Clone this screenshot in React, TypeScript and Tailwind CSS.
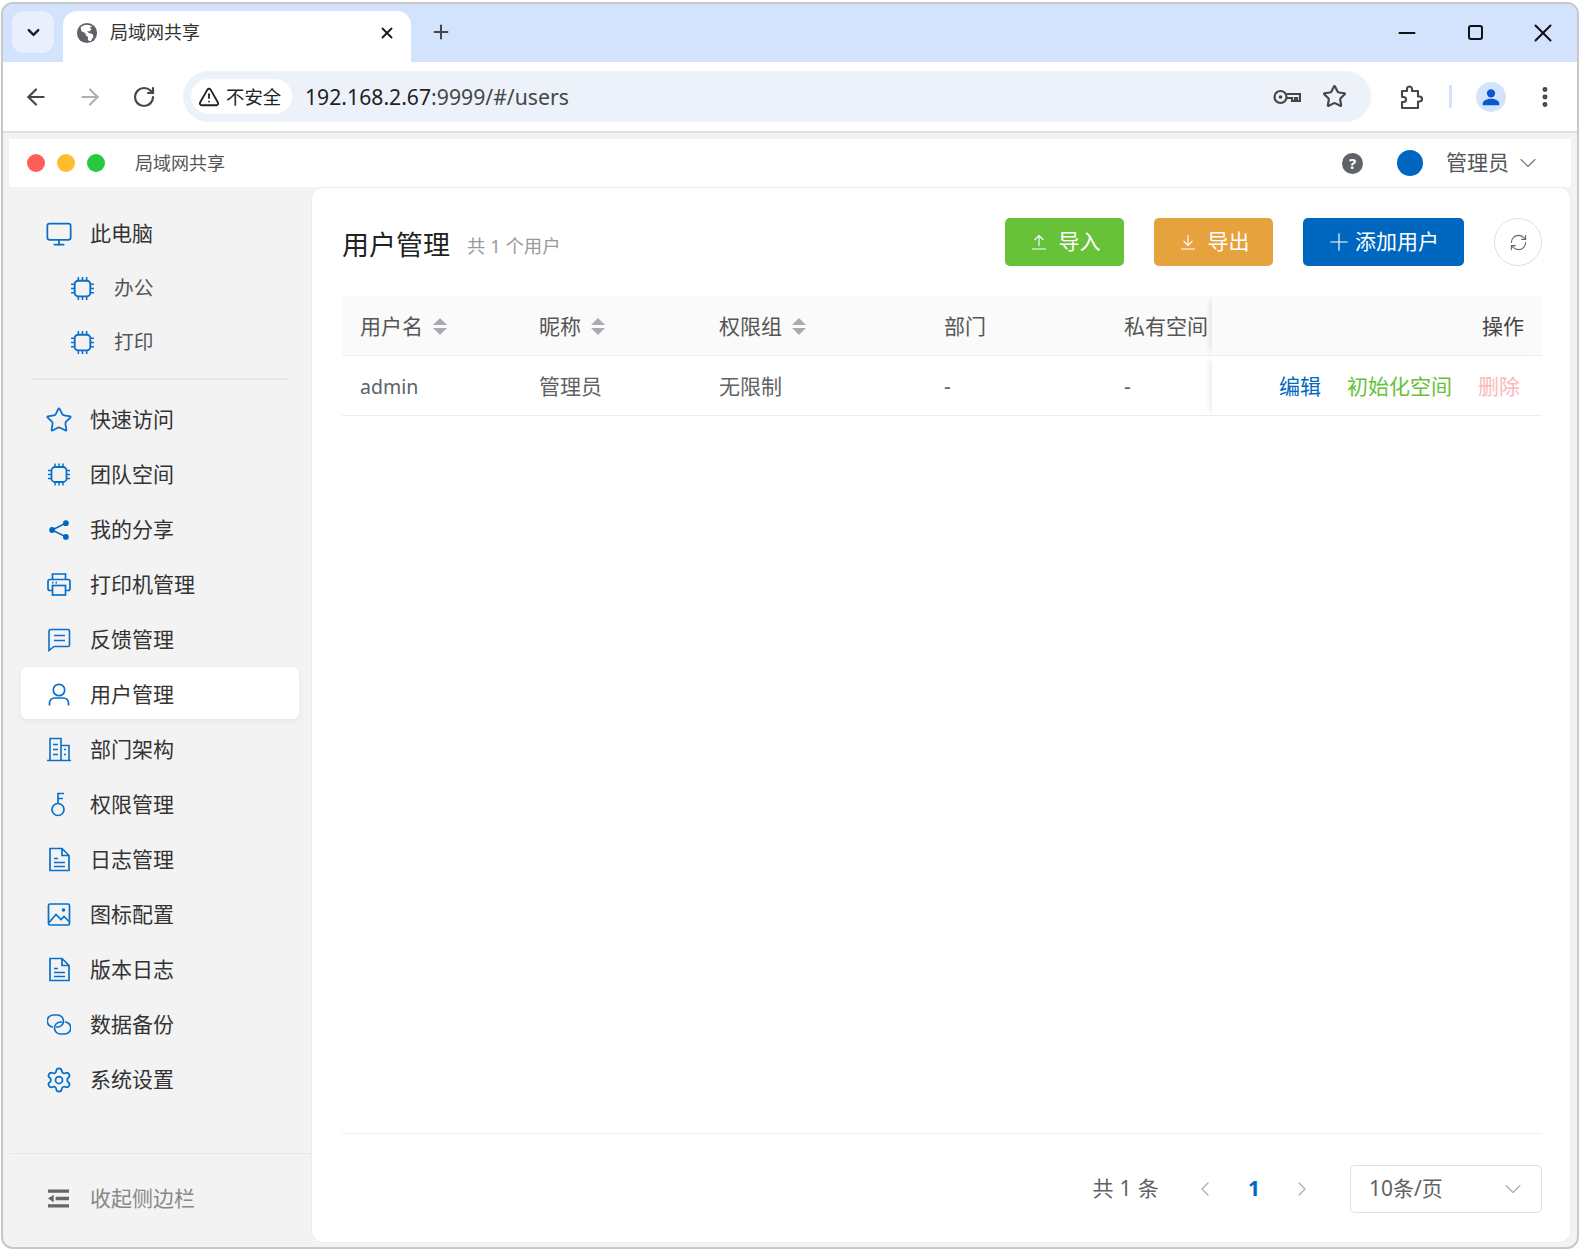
import React from 'react';
import { ArrowLeft, ArrowRight, ChevronDown, ChevronLeft, ChevronRight, EllipsisVertical, Minus, Monitor, Plus, RefreshCw, RotateCw, Settings, Star, TriangleAlert, X } from 'lucide-react';

const font = 'font-["Noto_Sans","Noto_Sans_CJK_SC",sans-serif]';

// icons the packages don't have in this shape
const Chip = ({ className = 'w-6 h-6' }: { className?: string }) => (
  <svg viewBox="0 0 24 24" fill="none" stroke="currentColor" strokeWidth="1.5" className={className}>
    <rect x="4.5" y="4.5" width="15" height="15" rx="3.5" strokeWidth="1.8" />
    <path d="M8 1v3M12 1v3M16 1v3M8 20v3M12 20v3M16 20v3M1 8h3M1 12h3M1 16h3M20 8h3M20 12h3M20 16h3" />
  </svg>
);
const Share = ({ className = 'w-6 h-6' }: { className?: string }) => (
  <svg viewBox="0 0 24 24" fill="currentColor" className={className}>
    <circle cx="19.5" cy="4.5" r="3.2" />
    <circle cx="4.5" cy="12" r="3.2" />
    <circle cx="19.5" cy="19.5" r="3.2" />
    <path d="M4.5 12 19.5 4.5M4.5 12l15 7.5" stroke="currentColor" strokeWidth="1.8" />
  </svg>
);
const PrinterIcon = ({ className = 'w-6 h-6' }: { className?: string }) => (
  <svg viewBox="0 0 24 24" fill="none" stroke="currentColor" strokeWidth="1.7" className={className}>
    <path d="M5.5 7V1.5h13V7" />
    <path d="M5.5 18H3a2 2 0 0 1-2-2V9a2 2 0 0 1 2-2h18a2 2 0 0 1 2 2v7a2 2 0 0 1-2 2h-2.5" />
    <rect x="5.5" y="13" width="13" height="9.500" />
    <path d="M5 10.200h1.500M8.500 10.200h1.500" />
  </svg>
);
const Chat = ({ className = 'w-6 h-6' }: { className?: string }) => (
  <svg viewBox="0 0 24 24" fill="none" stroke="currentColor" strokeWidth="1.6" className={className}>
    <path d="M4 2h17a1.5 1.5 0 0 1 1.5 1.5v14a1.5 1.5 0 0 1-1.5 1.5H7l-5 4V4a2 2 0 0 1 2-2Z" />
    <path d="M7 8h11M7 13h11" />
  </svg>
);
const Person = ({ className = 'w-6 h-6' }: { className?: string }) => (
  <svg viewBox="0 0 24 24" fill="none" stroke="currentColor" strokeWidth="1.7" className={className}>
    <circle cx="12" cy="7.5" r="5.7" />
    <path d="M2.5 23v-2.5a5 5 0 0 1 5-5h9a5 5 0 0 1 5 5V23" />
  </svg>
);
const Building = ({ className = 'w-6 h-6' }: { className?: string }) => (
  <svg viewBox="0 0 24 24" fill="none" stroke="currentColor" strokeWidth="1.6" className={className}>
    <path d="M3 23V1h11v22M14 8h8v15M0 23h24" />
    <path d="M6 7h5M6 12h5M6 17h5M17 12h2M17 17h2" />
  </svg>
);
const KeyIcon = ({ className = 'w-6 h-6' }: { className?: string }) => (
  <svg viewBox="0 0 24 24" fill="none" stroke="currentColor" strokeWidth="1.7" className={className}>
    <circle cx="11" cy="17" r="6" />
    <path d="M11 11V1h6M11 6h5" />
  </svg>
);
const Doc = ({ className = 'w-6 h-6' }: { className?: string }) => (
  <svg viewBox="0 0 24 24" fill="none" stroke="currentColor" strokeWidth="1.7" className={className}>
    <path d="M3 1h12l7 7v15H3Z" />
    <path d="M15 1v7h7M7 11h4M7 15h11M7 19h11" />
  </svg>
);
const Picture = ({ className = 'w-6 h-6' }: { className?: string }) => (
  <svg viewBox="0 0 24 24" fill="none" stroke="currentColor" strokeWidth="1.7" className={className}>
    <rect x="1.5" y="1.5" width="21" height="21" rx="1.5" />
    <path d="m2 20 7-8 5 5 3-3 5 5" />
    <circle cx="16.5" cy="7.5" r="1.8" fill="currentColor" stroke="none" />
  </svg>
);
const Links = ({ className = 'w-6 h-6' }: { className?: string }) => (
  <svg viewBox="0 0 24 24" fill="none" stroke="currentColor" strokeWidth="1.7" className={className}>
    <path d="M6 14.5A6 6 0 0 1 6.5 2.5h4a6 6 0 0 1 0 12H9" />
    <path d="M18 9.5a6 6 0 0 1-.5 12h-4a6 6 0 0 1 0-12H15" />
  </svg>
);
const Collapse = ({ className = 'w-6 h-6' }: { className?: string }) => (
  <svg viewBox="0 0 24 24" fill="currentColor" className={className}>
    <path d="M1 2.5h22V6H1zM9 10.2h14v3.5H9zM1 18h22v3.5H1zM7 8v8L1 12z" />
  </svg>
);
const Globe = () => (
  <svg viewBox="0 0 24 24" className="w-[22px] h-[22px]">
    <circle cx="12" cy="12" r="11" fill="#5f6368" />
    <path d="M12 3c-3 0-5 1-7 3l1 4 4 2 1 3 2 1v4l3 1 3-5-1-3-4-1-2-2h3l2-2-2-2 3-1c-2-1-4-2-6-2Z" fill="#fff" />
  </svg>
);
const KeyChrome = () => (
  <svg viewBox="0 0 28 16" fill="none" stroke="#444746" strokeWidth="2.2" className="w-[28px] h-[16px]">
    <circle cx="7.5" cy="8" r="6" />
    <circle cx="7.5" cy="8" r="1.8" fill="#444746" stroke="none" />
    <path d="M13.5 5H27v7h-3V9h-2v3h-3V9h-5.5" />
  </svg>
);
const Puzzle = () => (
  <svg viewBox="0 0 24 24" fill="none" stroke="#444746" strokeWidth="2.1" className="w-[24px] h-[26px]">
    <path d="M3 6h5V4a2.5 2.5 0 0 1 5 0v2h6v5.5h1.5a2.5 2.5 0 0 1 0 5H19V23H3v-6h1.5a2.5 2.5 0 0 0 0-5H3Z" strokeLinejoin="round" />
  </svg>
);
const ArrowUpBar = () => (
  <svg viewBox="0 0 16 16" fill="none" stroke="currentColor" strokeWidth="1.1" className="w-[16px] h-[16px]">
    <path d="M8 12V1.5M3.5 6 8 1.5 12.5 6M1 15h14" />
  </svg>
);
const ArrowDownBar = () => (
  <svg viewBox="0 0 16 16" fill="none" stroke="currentColor" strokeWidth="1.1" className="w-[16px] h-[16px]">
    <path d="M8 1v10.5M3.5 7 8 11.5 12.5 7M1 15h14" />
  </svg>
);
const Sorter = () => (
  <span className="ml-[10px] flex flex-col gap-[3px]">
    <span className="w-0 h-0 border-x-[7px] border-x-transparent border-b-[7px] border-b-[#a8abb2]" />
    <span className="w-0 h-0 border-x-[7px] border-x-transparent border-t-[7px] border-t-[#a8abb2]" />
  </span>
);

const iconCls = 'w-[25px] h-[25px] text-[#0a6fc9]';
const lucideCls = 'w-[28px] h-[28px] shrink-0 text-[#0a6fc9]';

const navTop = [
  { label: '快速访问', icon: <Star className={lucideCls} strokeWidth={1.5} /> },
  { label: '团队空间', icon: <Chip className={iconCls} /> },
  { label: '我的分享', icon: <Share className="w-[22px] h-[22px] text-[#0067c0]" /> },
  { label: '打印机管理', icon: <PrinterIcon className={iconCls} /> },
  { label: '反馈管理', icon: <Chat className={iconCls} /> },
  { label: '用户管理', icon: <Person className={iconCls} />, active: true },
  { label: '部门架构', icon: <Building className={iconCls} /> },
  { label: '权限管理', icon: <KeyIcon className={iconCls} /> },
  { label: '日志管理', icon: <Doc className={iconCls} /> },
  { label: '图标配置', icon: <Picture className={iconCls} /> },
  { label: '版本日志', icon: <Doc className={iconCls} /> },
  { label: '数据备份', icon: <Links className={iconCls} /> },
  { label: '系统设置', icon: <Settings className={lucideCls} strokeWidth={1.5} /> },
];

const NavRow = ({ label, icon, active }: { label: string; icon: React.ReactNode; active?: boolean }) => (
  <div className="h-[55px] flex items-center">
    <div className={`ml-[12px] w-[278px] h-[52px] pl-[26px] flex items-center gap-[19px] rounded-[6px] ${active ? 'mb-[4px] pt-[4px] bg-white shadow-[0_2px_6px_rgba(0,0,0,0.06)]' : ''}`}>
      <span className="w-[24px] flex justify-center">{icon}</span>
      <span className="text-[21px] text-[#333]">{label}</span>
    </div>
  </div>
);

const SubRow = ({ label }: { label: string }) => (
  <div className="h-[54px] flex items-center pl-[61px] gap-[19px]">
    <Chip className={iconCls} />
    <span className="text-[19.7px] text-[#555]">{label}</span>
  </div>
);

export default function App() {
  return (
    <div className={`w-[1581px] h-[1249px] bg-white pl-px pt-[2px] ${font}`}>
      <div className="w-[1578px] h-[1247px] flex flex-col border-2 border-[#c8c8c8] rounded-[12px] overflow-hidden bg-[#f3f3f3]">
        {/* tab strip */}
        <div className="h-[58px] shrink-0 bg-[#d3e3fd] flex items-end pl-[9px]">
          <div className="w-[42px] h-[42px] mb-[9px] rounded-[12px] bg-[#e9f0fd] flex items-center justify-center">
            <ChevronDown className="w-[19px] h-[19px] text-[#1f1f1f]" strokeWidth={3} />
          </div>
          <div className="ml-[9px] w-[348px] h-[51px] bg-white rounded-t-[14px] flex items-center pl-[13px] pr-[15px] pb-[8px]">
            <Globe />
            <span className="ml-[12px] text-[18px] text-[#333] flex-1">局域网共享</span>
            <X className="w-[18px] h-[18px] text-[#1f1f1f]" strokeWidth={2.6} />
          </div>
          <div className="ml-[19px] mb-[19px]">
            <Plus className="w-[22px] h-[22px] text-[#444746]" strokeWidth={2.2} />
          </div>
          <div className="ml-auto flex items-center h-[58px] pb-[1px]">
            <div className="w-[68px] flex justify-center"><Minus className="w-[26px] h-[26px] text-[#111]" strokeWidth={1.7} /></div>
            <div className="w-[68px] flex justify-center"><span className="w-[15px] h-[15px] border-2 border-[#111] rounded-[3px]" /></div>
            <div className="w-[68px] flex justify-center"><X className="w-[30px] h-[30px] text-[#111]" strokeWidth={1.6} /></div>
          </div>
        </div>

        {/* browser toolbar */}
        <div className="h-[71px] shrink-0 bg-white border-b-2 border-[#dedede] flex items-center">
          <ArrowLeft className="ml-[20px] w-[26px] h-[26px] text-[#444746]" strokeWidth={2} />
          <ArrowRight className="ml-[28px] w-[26px] h-[26px] text-[#b0b0b0]" strokeWidth={2} />
          <RotateCw className="ml-[29px] w-[24px] h-[24px] text-[#444746]" strokeWidth={2.2} />
          <div className="ml-[27px] w-[1188px] h-[51px] rounded-full bg-[#edf2fa] flex items-center pl-[8px] pr-[24px]">
            <div className="h-[35px] w-[101px] rounded-full bg-white flex items-center pl-[7px] gap-[6px]">
              <TriangleAlert className="w-[22px] h-[22px] text-[#222]" strokeWidth={2} />
              <span className="text-[18.4px] text-[#222]">不安全</span>
            </div>
            <span className="ml-[13px] text-[21.2px] text-[#1f1f1f]">192.168.2.67<span className="text-[#444746]">:9999/#/users</span></span>
            <div className="ml-auto flex items-center gap-[21px]">
              <KeyChrome />
              <Star className="w-[25px] h-[25px] text-[#444746]" strokeWidth={2.1} />
            </div>
          </div>
          <div className="ml-[28px]"><Puzzle /></div>
          <div className="ml-[26px] w-[3px] h-[23px] bg-[#d3e3fd]" />
          <div className="ml-[24px] w-[30px] h-[30px] rounded-full bg-[#d3e3fd] flex items-center justify-center">
            <svg viewBox="0 0 24 24" fill="#0b57d0" className="w-[22px] h-[22px]"><circle cx="12" cy="8" r="4.5" /><path d="M3 21v-2c0-3 5-5 9-5s9 2 9 5v2Z" /></svg>
          </div>
          <EllipsisVertical className="ml-[26px] w-[26px] h-[26px] text-[#444746]" strokeWidth={2.6} />
        </div>

        {/* app */}
        <div className="flex-1 min-h-0 flex flex-col px-[6px] pt-[6px] pb-[4px]">
          <div className="h-[48px] shrink-0 bg-white flex items-center pl-[18px] pr-[29px]">
            <span className="w-[18px] h-[18px] rounded-full bg-[#ff5f57]" />
            <span className="ml-[12px] w-[18px] h-[18px] rounded-full bg-[#febc2e]" />
            <span className="ml-[12px] w-[18px] h-[18px] rounded-full bg-[#28c840]" />
            <span className="ml-[30px] text-[18px] text-[#555]">局域网共享</span>
            <span className="ml-auto w-[21px] h-[21px] rounded-full bg-[#5f6368] text-white text-[15px] font-bold flex items-center justify-center">?</span>
            <span className="ml-[34px] w-[26px] h-[26px] rounded-full bg-[#0067c0]" />
            <span className="ml-[23px] text-[21px] text-[#555]">管理员</span>
            <ChevronDown className="ml-[5px] w-[28px] h-[28px] text-[#777]" strokeWidth={1} />
          </div>

          <div className="flex-1 min-h-0 flex">
            {/* sidebar */}
            <aside className="w-[302px] shrink-0 flex flex-col pt-[19px]">
              <NavRow label="此电脑" icon={<Monitor className={lucideCls} strokeWidth={1.5} />} />
              <SubRow label="办公" />
              <SubRow label="打印" />
              <div className="ml-[24px] w-[254px] h-[2px] bg-[#e6e6e6] mt-[9px] mb-[12px]" />
              {navTop.map((item) => (
                <NavRow key={item.label} {...item} />
              ))}
              <div className="mt-auto h-[90px] border-t border-[#e6e6e6] pl-[38px] flex items-center gap-[20px]">
                <Collapse className="w-[23px] h-[23px] text-[#666]" />
                <span className="text-[21px] text-[#888]">收起侧边栏</span>
              </div>
            </aside>

            {/* main panel */}
            <main className="flex-1 min-w-0 flex flex-col bg-white border border-[#ececec] rounded-[12px] pl-[30px] pr-[28px]">
              <div className="h-[108px] shrink-0 flex items-start pt-[30px]">
                <h1 className="text-[27px] text-[#222] font-normal leading-[56px] h-[56px] -mt-[1px]">用户管理</h1>
                <span className="ml-[17px] mt-[14px] text-[18.4px] text-[#999]">共 1 个用户</span>
                <div className="ml-auto flex items-center">
                  <button className="w-[119px] h-[48px] pl-[2px] rounded-[5px] bg-[#67c23a] text-white text-[21px] flex items-center justify-center gap-[12px]"><ArrowUpBar />导入</button>
                  <button className="ml-[30px] w-[119px] h-[48px] pl-[2px] rounded-[5px] bg-[#e6a23c] text-white text-[21px] flex items-center justify-center gap-[12px]"><ArrowDownBar />导出</button>
                  <button className="ml-[30px] w-[161px] h-[48px] pr-[3px] rounded-[5px] bg-[#0067c0] text-white text-[21px] flex items-center justify-center gap-[2px]"><Plus className="w-[28px] h-[28px]" strokeWidth={1} />添加用户</button>
                  <button className="ml-[30px] w-[48px] h-[48px] rounded-full bg-white border border-[#dcdfe6] flex items-center justify-center"><RefreshCw className="w-[19px] h-[19px] text-[#666]" strokeWidth={1.4} /></button>
                </div>
              </div>

              {/* table */}
              <div className="shrink-0">
                <div className="h-[60px] flex bg-[#fafafa] border-b border-[#ebeef5] text-[21px] text-[#555]">
                  <div className="w-[179px] pl-[18px] pt-[2px] flex items-center">用户名<Sorter /></div>
                  <div className="w-[180px] pl-[18px] pt-[2px] flex items-center">昵称<Sorter /></div>
                  <div className="w-[225px] pl-[18px] pt-[2px] flex items-center">权限组<Sorter /></div>
                  <div className="w-[180px] pl-[18px] pt-[2px] flex items-center">部门</div>
                  <div className="flex-1 min-w-0 pl-[18px] pt-[2px] flex items-center whitespace-nowrap">私有空间</div>
                  <div className="w-[330px] pr-[18px] pt-[2px] flex items-center justify-end text-[#444] bg-[#fafafa] shadow-[-6px_0_6px_-4px_rgba(0,0,0,0.09)]">操作</div>
                </div>
                <div className="h-[60px] flex border-b border-[#ebeef5] text-[21px] text-[#606266]">
                  <div className="w-[179px] pl-[18px] pt-[3px] flex items-center text-[19.5px]">admin</div>
                  <div className="w-[180px] pl-[18px] pt-[3px] flex items-center">管理员</div>
                  <div className="w-[225px] pl-[18px] pt-[3px] flex items-center">无限制</div>
                  <div className="w-[180px] pl-[18px] pt-[3px] flex items-center">-</div>
                  <div className="flex-1 min-w-0 pl-[18px] pt-[3px] flex items-center">-</div>
                  <div className="w-[330px] pr-[22px] pt-[3px] flex items-center justify-end gap-[26px] bg-white shadow-[-6px_0_6px_-4px_rgba(0,0,0,0.09)]">
                    <span className="text-[#0067c0]">编辑</span>
                    <span className="text-[#67c23a]">初始化空间</span>
                    <span className="text-[#f9b9b9]">删除</span>
                  </div>
                </div>
              </div>

              {/* pagination */}
              <div className="mt-auto h-[109px] shrink-0 border-t border-[#ebeef5] flex items-center justify-end pt-[1px] text-[#606266]">
                <span className="text-[21px] tracking-[0.3px]">共 1 条</span>
                <ChevronLeft className="ml-[34px] w-[24px] h-[24px] text-[#a8abb2]" strokeWidth={1.2} />
                <span className="ml-[31px] text-[21px] font-bold text-[#0067c0]">1</span>
                <ChevronRight className="ml-[30px] w-[24px] h-[24px] text-[#a8abb2]" strokeWidth={1.2} />
                <div className="ml-[36px] w-[192px] h-[48px] rounded-[5px] border border-[#dcdfe6] flex items-center pl-[18px] pr-[14px] justify-between">
                  <span className="text-[21px]">10条/页</span>
                  <ChevronDown className="w-[28px] h-[28px] text-[#a8abb2]" strokeWidth={1} />
                </div>
              </div>
            </main>
          </div>
        </div>
      </div>
    </div>
  );
}
